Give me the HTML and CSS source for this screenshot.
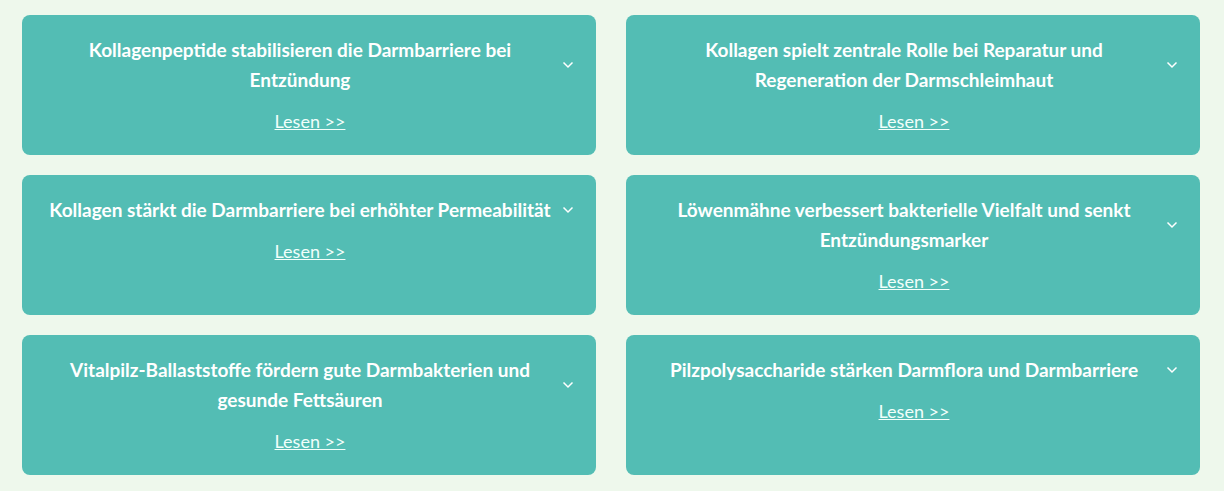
FILE: index.html
```html
<!DOCTYPE html>
<html lang="de">
<head>
    <meta charset="UTF-8">
    <meta name="viewport" content="width=device-width, initial-scale=1.0">
    <title>Studien</title>
    <link rel="stylesheet" href="styles.css">
</head>
<body>
    <div class="studies">
        <div class="study">
            <div class="study-head">
                <h3>Kollagenpeptide stabilisieren die Darmbarriere bei Entzündung</h3>
                <svg class="chevron" viewBox="0 0 12 8"><path d="M1.5 1.5 6 6l4.5-4.5"/></svg>
            </div>
            <a href="#">Lesen &gt;&gt;</a>
        </div>
        <div class="study">
            <div class="study-head">
                <h3>Kollagen spielt zentrale Rolle bei Reparatur und Regeneration der Darmschleimhaut</h3>
                <svg class="chevron" viewBox="0 0 12 8"><path d="M1.5 1.5 6 6l4.5-4.5"/></svg>
            </div>
            <a href="#">Lesen &gt;&gt;</a>
        </div>
        <div class="study">
            <div class="study-head">
                <h3>Kollagen stärkt die Darmbarriere bei erhöhter Permeabilität</h3>
                <svg class="chevron" viewBox="0 0 12 8"><path d="M1.5 1.5 6 6l4.5-4.5"/></svg>
            </div>
            <a href="#">Lesen &gt;&gt;</a>
        </div>
        <div class="study">
            <div class="study-head">
                <h3>Löwenmähne verbessert bakterielle Vielfalt und senkt Entzündungsmarker</h3>
                <svg class="chevron" viewBox="0 0 12 8"><path d="M1.5 1.5 6 6l4.5-4.5"/></svg>
            </div>
            <a href="#">Lesen &gt;&gt;</a>
        </div>
        <div class="study">
            <div class="study-head">
                <h3>Vitalpilz-Ballaststoffe fördern gute Darmbakterien und gesunde Fettsäuren</h3>
                <svg class="chevron" viewBox="0 0 12 8"><path d="M1.5 1.5 6 6l4.5-4.5"/></svg>
            </div>
            <a href="#">Lesen &gt;&gt;</a>
        </div>
        <div class="study">
            <div class="study-head">
                <h3>Pilzpolysaccharide stärken Darmflora und Darmbarriere</h3>
                <svg class="chevron" viewBox="0 0 12 8"><path d="M1.5 1.5 6 6l4.5-4.5"/></svg>
            </div>
            <a href="#">Lesen &gt;&gt;</a>
        </div>
    </div>
</body>
</html>
```

FILE: styles.css
```css
body {
    margin: 0;
    padding: 15px 24px 15px 22px;
    background-color: #eef8ec;
    font-family: Lato, "Noto Sans", sans-serif;
    color: #fff;
}

.studies {
    display: grid;
    grid-template-columns: 1fr 1fr;
    grid-auto-rows: 140px;
    gap: 20px 30px;
}

.study {
    background-color: #53bdb4;
    border-radius: 8px;
    padding: 20px 22px 0 24px;
    display: flex;
    flex-direction: column;
    align-items: center;
}

.study-head {
    display: flex;
    align-items: center;
    width: 100%;
}

.study h3 {
    flex: 1;
    margin: 0;
    font-size: 19px;
    font-weight: 700;
    line-height: 30px;
    text-align: center;
}

.chevron {
    width: 12px;
    height: 8px;
    margin-left: 8px;
    fill: none;
    stroke: #fff;
    stroke-width: 1.5;
}

.study a {
    margin-top: 14px;
    color: #f2fffb;
    font-size: 18px;
    line-height: 24px;
    font-weight: 400;
}
```
